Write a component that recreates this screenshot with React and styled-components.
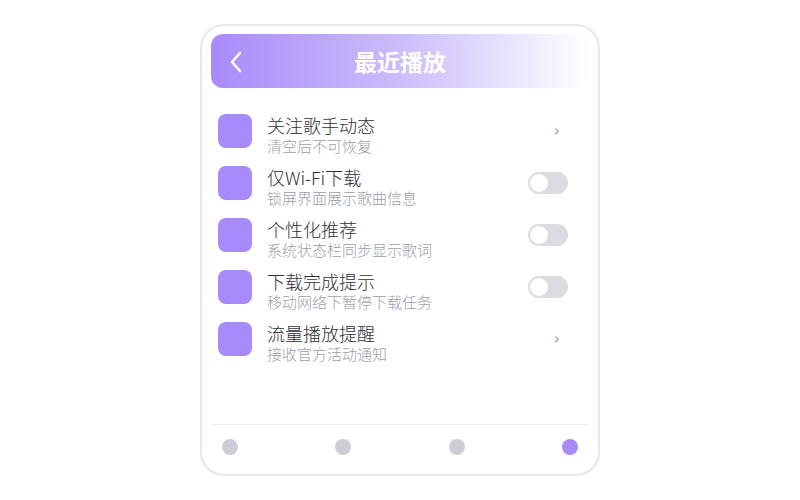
import styled, { createGlobalStyle } from 'styled-components';

const GlobalStyle = createGlobalStyle`
  * { box-sizing: border-box; }
  body {
    margin: 0;
    background: #ffffff;
    font-family: "Noto Sans CJK SC", "Noto Sans", sans-serif;
  }
`;

const items = [
  { title: '关注歌手动态', sub: '清空后不可恢复', type: 'arrow' },
  { title: '仅Wi-Fi下载', sub: '锁屏界面展示歌曲信息', type: 'toggle' },
  { title: '个性化推荐', sub: '系统状态栏同步显示歌词', type: 'toggle' },
  { title: '下载完成提示', sub: '移动网络下暂停下载任务', type: 'toggle' },
  { title: '流量播放提醒', sub: '接收官方活动通知', type: 'arrow' },
];

export default function App() {
  return (
    <>
      <GlobalStyle />
      <Page>
        <Phone>
          <Header>
            <BackButton>
              <svg width="14" height="22" viewBox="0 0 14 22" fill="none">
                <path d="M11 2 L3 11 L11 20" stroke="#fff" strokeWidth="2.6" strokeLinecap="round" strokeLinejoin="round" />
              </svg>
            </BackButton>
            <Title>最近播放</Title>
          </Header>

          <List>
            {items.map((item) => (
              <Row key={item.title}>
                <IconBox />
                <TextCol>
                  <ItemTitle>{item.title}</ItemTitle>
                  <ItemSub>{item.sub}</ItemSub>
                </TextCol>
                {item.type === 'toggle' ? (
                  <Toggle>
                    <Knob />
                  </Toggle>
                ) : (
                  <Arrow>›</Arrow>
                )}
              </Row>
            ))}
          </List>

          <Nav>
            {[0, 1, 2, 3].map((i) => (
              <Dot key={i} active={i === 3} />
            ))}
          </Nav>
        </Phone>
      </Page>
    </>
  );
}

const Page = styled.div`
  width: 800px;
  height: 500px;
  display: flex;
  justify-content: center;
  align-items: center;
`;

const Phone = styled.div`
  width: 400px;
  height: 452px;
  border: 2px solid #e6e7eb;
  border-radius: 24px;
  padding: 8px 9px 0;
  display: flex;
  flex-direction: column;
  background: #fff;
`;

const Header = styled.div`
  position: relative;
  height: 54px;
  border-radius: 12px;
  background: linear-gradient(90deg, #a78bfa 0%, #cbbcfb 50%, #ffffff 100%);
  display: flex;
  align-items: center;
  justify-content: center;
`;

const BackButton = styled.div`
  position: absolute;
  left: 18px;
  top: 17px;
  display: flex;
`;

const Title = styled.div`
  color: #fff;
  font-size: 23px;
  font-weight: 700;
`;

const List = styled.div`
  flex: 1;
  padding: 26px 21px 0 7px;
  display: flex;
  flex-direction: column;
  gap: 10px;
`;

const Row = styled.div`
  display: flex;
  align-items: flex-start;
`;

const IconBox = styled.div`
  width: 34px;
  height: 34px;
  border-radius: 8px;
  background: #a78bfa;
  flex-shrink: 0;
`;

const TextCol = styled.div`
  flex: 1;
  margin-left: 15px;
  display: flex;
  flex-direction: column;
`;

const ItemTitle = styled.div`
  font-size: 18px;
  line-height: 22px;
  font-weight: 300;
  color: #2f3137;
`;

const ItemSub = styled.div`
  font-size: 15px;
  line-height: 20px;
  font-weight: 300;
  color: #9a9ea8;
`;

const Toggle = styled.div`
  width: 40px;
  height: 22px;
  margin-top: 6px;
  border-radius: 11px;
  background: #dadce1;
  padding: 2px;
  display: flex;
`;

const Knob = styled.div`
  width: 18px;
  height: 18px;
  border-radius: 50%;
  background: #fff;
`;

const Arrow = styled.div`
  margin-top: 6px;
  margin-right: 8px;
  font-size: 16px;
  line-height: 22px;
  color: #9ca3af;
  font-family: "DejaVu Sans", sans-serif;
`;

const Nav = styled.div`
  border-top: 1px solid #eceef2;
  margin: 0 1px;
  padding: 14px 10px 19px;
  display: flex;
  justify-content: space-between;
`;

const Dot = styled.div`
  width: 16px;
  height: 16px;
  border-radius: 50%;
  background: ${(p) => (p.active ? '#a78bfa' : '#cbcfd5')};
`;
